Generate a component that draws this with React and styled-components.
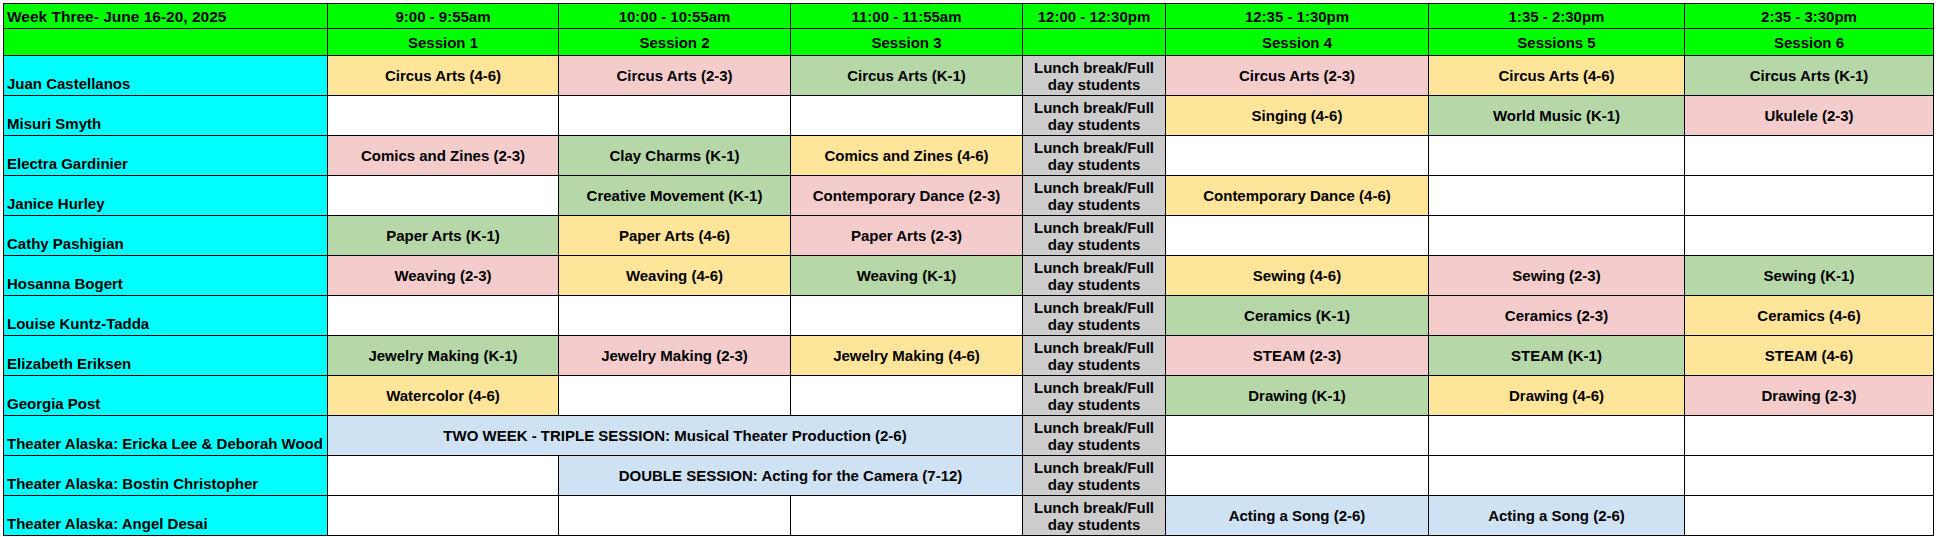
import React from "react";
import styled, { createGlobalStyle } from "styled-components";

const GlobalStyle = createGlobalStyle`
  html, body { margin: 0; padding: 0; background: #ffffff; }
  body { font-family: "Liberation Sans", Arial, sans-serif; }
`;

const COLORS = {
  head: "#00ff00",
  name: "#00ffff",
  Y: "#ffe599",
  P: "#f4cccc",
  G: "#b6d7a8",
  B: "#cfe2f3",
  L: "#cccccc",
  W: "#ffffff",
};

const Page = styled.div`
  padding: 3px 0 0 3px;
`;

const Sheet = styled.div`
  display: grid;
  grid-template-columns: 324px 231px 232px 232px 143px 263px 256px 249px;
  grid-template-rows: 25px 27px repeat(12, 40px);
  width: max-content;
  border-top: 1px solid #000;
  border-left: 1px solid #000;
`;

const Cell = styled.div`
  box-sizing: border-box;
  border-right: 1px solid #000;
  border-bottom: 1px solid #000;
  background: ${(p) => COLORS[p.$bg] || "#fff"};
  font-family: "Liberation Sans", Arial, sans-serif;
  font-weight: bold;
  font-size: 15px;
  line-height: 17px;
  color: #000;
  display: flex;
  align-items: center;
  justify-content: center;
  text-align: center;
  padding: 0 3px;
  overflow: hidden;
  white-space: nowrap;
  grid-column: span ${(p) => p.$span || 1};
`;

const TitleCell = styled(Cell)`
  justify-content: flex-start;
  text-align: left;
  padding-left: 3px;
  font-size: 15.5px;
`;

const NameCell = styled(Cell)`
  justify-content: flex-start;
  align-items: flex-end;
  text-align: left;
  padding: 0 3px 3px 3px;
`;

const LunchCell = styled(Cell)`
  white-space: normal;
  line-height: 17px;
  padding: 0 4px;
`;

const times = [
  "9:00 - 9:55am",
  "10:00 - 10:55am",
  "11:00 - 11:55am",
  "12:00 - 12:30pm",
  "12:35 - 1:30pm",
  "1:35 - 2:30pm",
  "2:35 - 3:30pm",
];

const sessions = ["Session 1", "Session 2", "Session 3", "", "Session 4", "Sessions 5", "Session 6"];

// each row: name, then list of [text, color, span]; "L" entry = lunch
const rows = [
  ["Juan Castellanos", [["Circus Arts (4-6)", "Y"], ["Circus Arts (2-3)", "P"], ["Circus Arts (K-1)", "G"], "L", ["Circus Arts (2-3)", "P"], ["Circus Arts (4-6)", "Y"], ["Circus Arts (K-1)", "G"]]],
  ["Misuri Smyth", [["", "W"], ["", "W"], ["", "W"], "L", ["Singing (4-6)", "Y"], ["World Music (K-1)", "G"], ["Ukulele (2-3)", "P"]]],
  ["Electra Gardinier", [["Comics and Zines (2-3)", "P"], ["Clay Charms (K-1)", "G"], ["Comics and Zines (4-6)", "Y"], "L", ["", "W"], ["", "W"], ["", "W"]]],
  ["Janice Hurley", [["", "W"], ["Creative Movement (K-1)", "G"], ["Contemporary Dance (2-3)", "P"], "L", ["Contemporary Dance (4-6)", "Y"], ["", "W"], ["", "W"]]],
  ["Cathy Pashigian", [["Paper Arts (K-1)", "G"], ["Paper Arts (4-6)", "Y"], ["Paper Arts (2-3)", "P"], "L", ["", "W"], ["", "W"], ["", "W"]]],
  ["Hosanna Bogert", [["Weaving (2-3)", "P"], ["Weaving (4-6)", "Y"], ["Weaving (K-1)", "G"], "L", ["Sewing (4-6)", "Y"], ["Sewing (2-3)", "P"], ["Sewing (K-1)", "G"]]],
  ["Louise Kuntz-Tadda", [["", "W"], ["", "W"], ["", "W"], "L", ["Ceramics (K-1)", "G"], ["Ceramics (2-3)", "P"], ["Ceramics (4-6)", "Y"]]],
  ["Elizabeth Eriksen", [["Jewelry Making (K-1)", "G"], ["Jewelry Making (2-3)", "P"], ["Jewelry Making (4-6)", "Y"], "L", ["STEAM (2-3)", "P"], ["STEAM (K-1)", "G"], ["STEAM (4-6)", "Y"]]],
  ["Georgia Post", [["Watercolor (4-6)", "Y"], ["", "W"], ["", "W"], "L", ["Drawing (K-1)", "G"], ["Drawing (4-6)", "Y"], ["Drawing (2-3)", "P"]]],
  ["Theater Alaska: Ericka Lee & Deborah Wood", [["TWO WEEK - TRIPLE SESSION: Musical Theater Production (2-6)", "B", 3], "L", ["", "W"], ["", "W"], ["", "W"]]],
  ["Theater Alaska: Bostin Christopher", [["", "W"], ["DOUBLE SESSION: Acting for the Camera (7-12)", "B", 2], "L", ["", "W"], ["", "W"], ["", "W"]]],
  ["Theater Alaska: Angel Desai", [["", "W"], ["", "W"], ["", "W"], "L", ["Acting a Song (2-6)", "B"], ["Acting a Song (2-6)", "B"], ["", "W"]]],
];

export default function App() {
  return (
    <Page>
      <GlobalStyle />
      <Sheet>
        <TitleCell $bg="head">Week Three- June 16-20, 2025</TitleCell>
        {times.map((t) => (
          <Cell key={t} $bg="head">{t}</Cell>
        ))}
        <Cell $bg="head" />
        {sessions.map((s, i) => (
          <Cell key={"s" + i} $bg="head">{s}</Cell>
        ))}
        {rows.map(([name, cells]) => (
          <React.Fragment key={name}>
            <NameCell $bg="name">{name}</NameCell>
            {cells.map((c, i) =>
              c === "L" ? (
                <LunchCell key={i} $bg="L">
                  Lunch break/Full day students
                </LunchCell>
              ) : (
                <Cell key={i} $bg={c[1]} $span={c[2]}>
                  {c[0]}
                </Cell>
              )
            )}
          </React.Fragment>
        ))}
      </Sheet>
    </Page>
  );
}
